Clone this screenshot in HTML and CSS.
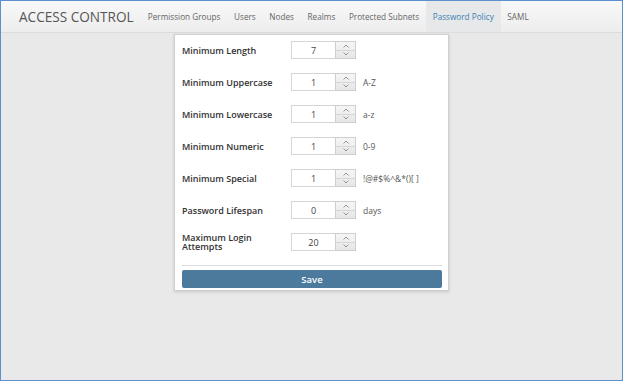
FILE: index.html
```html
<!DOCTYPE html>
<html lang="en">

<head>
    <meta charset="UTF-8">
    <title>Access Control - Password Policy</title>
    <link rel="stylesheet" href="styles.css">
</head>

<body>
    <header class="topbar">
        <div class="brand">ACCESS CONTROL</div>
        <nav class="tabs">
            <a href="#">Permission Groups</a>
            <a href="#">Users</a>
            <a href="#">Nodes</a>
            <a href="#">Realms</a>
            <a href="#">Protected Subnets</a>
            <a href="#" class="active">Password Policy</a>
            <a href="#">SAML</a>
        </nav>
    </header>

    <main class="content">
        <form class="policy">
            <div class="row">
                <label>Minimum Length</label>
                <div class="spin">
                    <span class="val">7</span>
                    <span class="btns">
                        <i><svg viewBox="0 0 6 4"><path d="M0.5 3.5 L3 1 L5.5 3.5"/></svg></i>
                        <i><svg viewBox="0 0 6 4"><path d="M0.5 0.5 L3 3 L5.5 0.5"/></svg></i>
                    </span>
                </div>
            </div>
            <div class="row">
                <label>Minimum Uppercase</label>
                <div class="spin">
                    <span class="val">1</span>
                    <span class="btns">
                        <i><svg viewBox="0 0 6 4"><path d="M0.5 3.5 L3 1 L5.5 3.5"/></svg></i>
                        <i><svg viewBox="0 0 6 4"><path d="M0.5 0.5 L3 3 L5.5 0.5"/></svg></i>
                    </span>
                </div>
                <span class="hint">A-Z</span>
            </div>
            <div class="row">
                <label>Minimum Lowercase</label>
                <div class="spin">
                    <span class="val">1</span>
                    <span class="btns">
                        <i><svg viewBox="0 0 6 4"><path d="M0.5 3.5 L3 1 L5.5 3.5"/></svg></i>
                        <i><svg viewBox="0 0 6 4"><path d="M0.5 0.5 L3 3 L5.5 0.5"/></svg></i>
                    </span>
                </div>
                <span class="hint">a-z</span>
            </div>
            <div class="row">
                <label>Minimum Numeric</label>
                <div class="spin">
                    <span class="val">1</span>
                    <span class="btns">
                        <i><svg viewBox="0 0 6 4"><path d="M0.5 3.5 L3 1 L5.5 3.5"/></svg></i>
                        <i><svg viewBox="0 0 6 4"><path d="M0.5 0.5 L3 3 L5.5 0.5"/></svg></i>
                    </span>
                </div>
                <span class="hint">0-9</span>
            </div>
            <div class="row">
                <label>Minimum Special</label>
                <div class="spin">
                    <span class="val">1</span>
                    <span class="btns">
                        <i><svg viewBox="0 0 6 4"><path d="M0.5 3.5 L3 1 L5.5 3.5"/></svg></i>
                        <i><svg viewBox="0 0 6 4"><path d="M0.5 0.5 L3 3 L5.5 0.5"/></svg></i>
                    </span>
                </div>
                <span class="hint">!@#$%^&amp;*()[ ]</span>
            </div>
            <div class="row">
                <label>Password Lifespan</label>
                <div class="spin">
                    <span class="val">0</span>
                    <span class="btns">
                        <i><svg viewBox="0 0 6 4"><path d="M0.5 3.5 L3 1 L5.5 3.5"/></svg></i>
                        <i><svg viewBox="0 0 6 4"><path d="M0.5 0.5 L3 3 L5.5 0.5"/></svg></i>
                    </span>
                </div>
                <span class="hint">days</span>
            </div>
            <div class="row">
                <label>Maximum Login Attempts</label>
                <div class="spin">
                    <span class="val">20</span>
                    <span class="btns">
                        <i><svg viewBox="0 0 6 4"><path d="M0.5 3.5 L3 1 L5.5 3.5"/></svg></i>
                        <i><svg viewBox="0 0 6 4"><path d="M0.5 0.5 L3 3 L5.5 0.5"/></svg></i>
                    </span>
                </div>
            </div>

            <div class="actions">
                <button type="button" class="save-btn">Save</button>
            </div>
        </form>
    </main>
</body>

</html>
```

FILE: styles.css
```css
html,
body {
    height: 100%;
}

body {
    margin: 0;
    box-sizing: border-box;
    border: 1px solid #5b8fd0;
    background-color: #e9e9e9;
    font-family: "Open Sans", Arial, sans-serif;
    color: #333;
}

/* top bar */
.topbar {
    display: flex;
    align-items: center;
    height: 31px;
    background: linear-gradient(#f8f8f8, #ededed);
    border-bottom: 1px solid #dcdcdc;
}

.brand {
    padding-left: 18px;
    width: 122px;
    font-size: 13.6px;
    color: #555;
}

.tabs {
    display: flex;
    align-items: stretch;
    height: 100%;
}

.tabs a {
    display: flex;
    align-items: center;
    padding: 0 6.8px;
    font-size: 8.2px;
    color: #666;
    text-decoration: none;
}

.tabs a.active {
    color: #3b7fb3;
    background-color: #e6e8e9;
}

/* form panel */
.content {
    display: flex;
    justify-content: center;
    padding-top: 1px;
}

.policy {
    width: 260px;
    padding: 6px 6px 2px 7px;
    background-color: #fff;
    border: 1px solid #cfcfcf;
    box-shadow: 0 1px 3px rgba(0, 0, 0, 0.15);
}

.row {
    display: flex;
    align-items: center;
    height: 18px;
    margin-bottom: 14px;
}

.row label {
    width: 96px;
    margin-right: 13px;
    font-size: 9px;
    font-weight: 600;
    line-height: 9px;
    color: #333;
}

.spin {
    display: flex;
    height: 18px;
}

.spin .val {
    display: flex;
    align-items: center;
    justify-content: center;
    width: 43px;
    border: 1px solid #d6d6d6;
    border-right: none;
    font-size: 9px;
    color: #444;
}

.btns {
    display: flex;
    flex-direction: column;
    width: 19px;
    border: 1px solid #cfcfcf;
    background: linear-gradient(#f6f6f6, #e6e6e6);
}

.btns i {
    flex: 1;
    display: flex;
    align-items: center;
    justify-content: center;
}

.btns i + i {
    border-top: 1px solid #d6d6d6;
}

.btns svg {
    width: 6px;
    height: 4px;
    fill: none;
    stroke: #8a8a8a;
    stroke-width: 0.9;
}

.hint {
    margin-left: 7px;
    font-size: 8.5px;
    color: #555;
}

.actions {
    margin-top: 11px;
    padding-top: 4px;
    border-top: 1px solid #dcdcdc;
}

.save-btn {
    display: block;
    width: 100%;
    height: 18px;
    border: none;
    border-radius: 2px;
    background-color: #4b7a9d;
    color: #fff;
    font-family: "Open Sans", Arial, sans-serif;
    font-size: 9.5px;
    font-weight: 600;
    cursor: pointer;
}
```
